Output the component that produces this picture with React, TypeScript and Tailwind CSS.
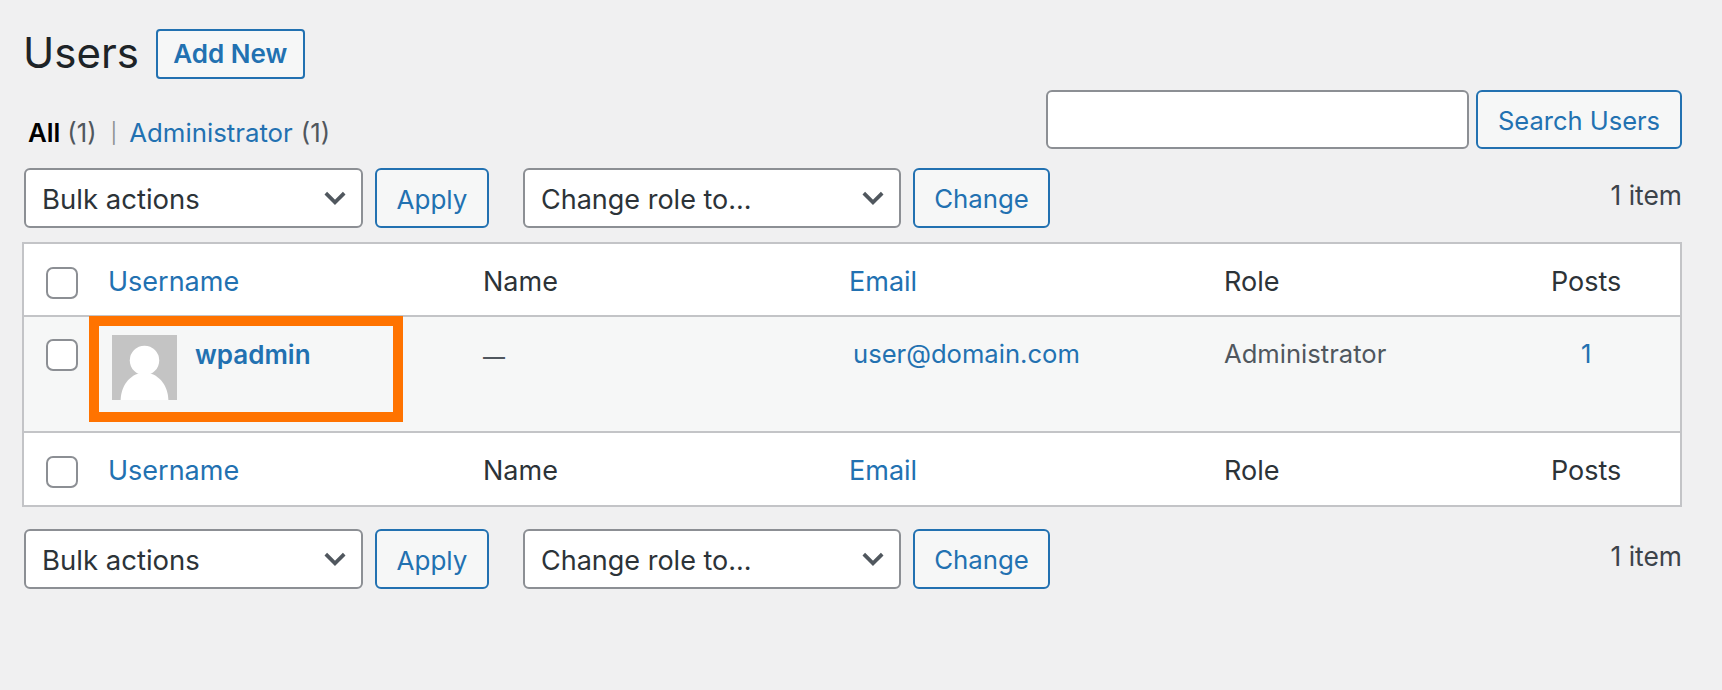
const font = "font-['Inter','Liberation_Sans',sans-serif]";

function Chevron() {
  return (
    <svg viewBox="0 0 24 24" className="h-[26px] w-[26px] shrink-0 text-[#50575e]" fill="none" stroke="currentColor" strokeWidth="3.4">
      <path d="M3.5 7.5 12 16l8.5-8.5" />
    </svg>
  );
}

function Select({ label, width, className = "" }: { label: string; width: string; className?: string }) {
  return (
    <div className={`${width} ${className} flex h-full items-center justify-between rounded-[6px] border-2 border-[#8c8f94] bg-white pl-[16px] pr-[13px] text-[#2c3338]`}>
      <span className="pt-[4px]">{label}</span>
      <Chevron />
    </div>
  );
}

function Button({ label, width, className = "" }: { label: string; width: string; className?: string }) {
  return (
    <div className={`${width} ${className} flex h-full items-center justify-center rounded-[6px] border-2 border-[#2271b1] bg-[#f6f7f7] text-[#2271b1]`}>
      {label}
    </div>
  );
}

function Actions({ className = "" }: { className?: string }) {
  return (
    <div className={`${className} flex h-[60px] items-center`}>
      <Select label="Bulk actions" width="w-[339px]" className="text-[27.5px]" />
      <Button label="Apply" width="w-[114px]" className="ml-[12px] pt-[2px] text-[26px]" />
      <Select label="Change role to..." width="w-[378px]" className="ml-[34px] text-[27px]" />
      <Button label="Change" width="w-[137px]" className="ml-[12px] pt-[2px] text-[25.8px]" />
      <div className="ml-auto pb-[4px] text-[26.4px] text-[#3c434a]">1 item</div>
    </div>
  );
}

function Checkbox() {
  return <div className="h-[32px] w-[32px] rounded-[7px] border-2 border-[#8c8f94] bg-white" />;
}

const cols = "grid grid-cols-[84px_375px_366px_375px_327px_1fr]";

function HeadRow({ className }: { className: string }) {
  return (
    <div className={`${cols} ${className} items-center bg-white text-[27px] text-[#2c3338]`}>
      <div className="pl-[22px]"><Checkbox /></div>
      <div className="text-[#2271b1]">Username</div>
      <div>Name</div>
      <div className="text-[#2271b1]">Email</div>
      <div>Role</div>
      <div>Posts</div>
    </div>
  );
}

export default function App() {
  return (
    <div className={`${font} h-[690px] w-[1722px] overflow-hidden bg-[#f0f0f1] pl-[22px] pr-[40px] pt-[29px]`}>
      <div className="flex h-[50px] items-center pl-[1px]">
        <h1 className="-mt-[4px] text-[42px] font-normal text-[#1d2327]">Users</h1>
        <div className="ml-[17px] flex h-full w-[149px] items-center justify-center rounded-[4px] border-2 border-[#2271b1] bg-[#f6f7f7] pb-[2px] text-[26px] font-semibold text-[#2271b1]">
          Add New
        </div>
      </div>

      <div className="mt-[11px] flex h-[59px] items-start">
        <div className="mt-[24px] flex items-center pl-[6px] text-[25.8px] text-[#50575e]">
          <span className="font-semibold text-black">All</span>
          <span className="ml-[7px]">(1)</span>
          <span className="ml-[14px] text-[20px] text-[#8c8f94]">|</span>
          <span className="ml-[12px] text-[#2271b1]">Administrator</span>
          <span className="ml-[8px]">(1)</span>
        </div>
        <div className="ml-auto flex h-full">
          <div className="w-[423px] rounded-[6px] border-2 border-[#8c8f94] bg-white" />
          <Button label="Search Users" width="w-[206px]" className="ml-[7px] pt-[4px] text-[25.5px]" />
        </div>
      </div>

      <Actions className="mt-[19px] pl-[2px]" />

      <div className="mt-[14px] border-2 border-[#c3c4c7] bg-white">
        <HeadRow className="h-[73px] border-b-2 border-[#c3c4c7] pt-[6px]" />
        <div className={`${cols} h-[116px] border-b-2 border-[#c3c4c7] bg-[#f6f7f7] text-[25.6px] text-[#50575e]`}>
          <div className="pl-[22px] pt-[22px]"><Checkbox /></div>
          <div className="relative flex pl-[4px] pt-[18px]">
            <div className="absolute -top-[1px] -left-[19px] h-[106px] w-[314px] border-[10px] border-[#ff7300]" />
            <svg viewBox="0 0 64 64" className="h-[65px] w-[65px] bg-[#c4c4c4]" fill="#ffffff">
              <circle cx="32" cy="25" r="14.5" />
              <path d="M8.5 64C9 48 20 37 32 37s23 11 23.5 27z" />
            </svg>
            <span className="ml-[18px] text-[26px] font-semibold text-[#2271b1]">wpadmin</span>
          </div>
          <div className="pt-[24px] text-[22px] font-medium">—</div>
          <div className="pl-[4px] pt-[18px] text-[#2271b1]">user@domain.com</div>
          <div className="pt-[18px]">Administrator</div>
          <div className="pl-[30px] pt-[18px] text-[#2271b1]">1</div>
        </div>
        <HeadRow className="h-[72px] pt-[5px]" />
      </div>

      <Actions className="mt-[22px] pl-[2px]" />
    </div>
  );
}
